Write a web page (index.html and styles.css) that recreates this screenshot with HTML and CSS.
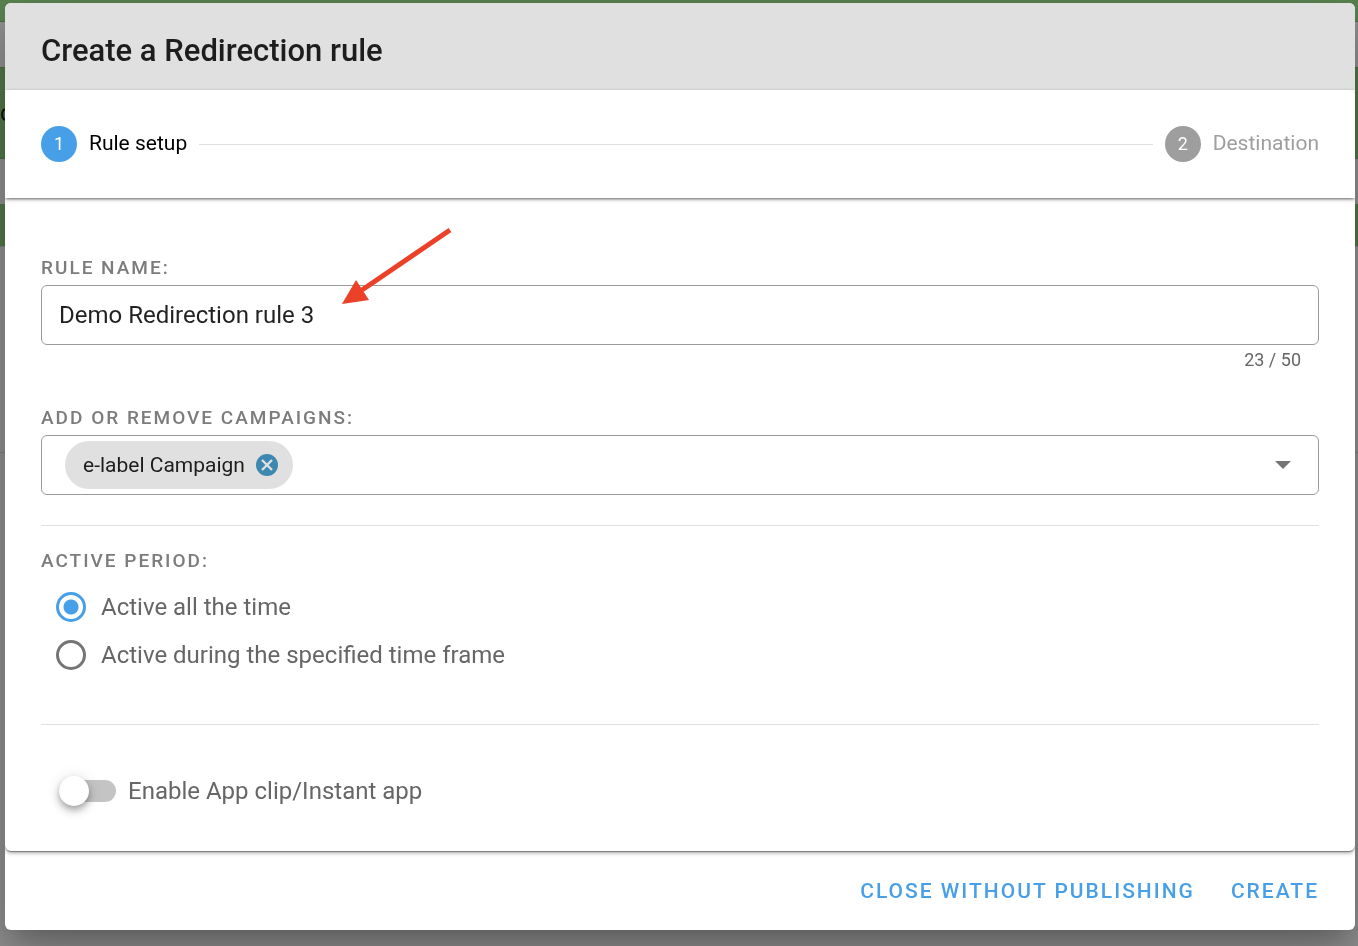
FILE: index.html
```html
<!DOCTYPE html>
<html lang="en">
<head>
<meta charset="utf-8">
<meta name="viewport" content="width=device-width, initial-scale=1">
<title>Create a Redirection rule</title>
<link rel="stylesheet" href="styles.css">
</head>
<body>
<div class="backdrop" aria-hidden="true">
  <div class="band band-top"></div>
  <div class="band band-gap"></div>
  <div class="band band-main"><span>c</span></div>
  <div class="band band-gap"></div>
  <div class="band band-low"></div>
  <div class="band band-panel"></div>
</div>

<main class="dialog" role="dialog" aria-labelledby="dialog-title">
  <header class="dialog-header">
    <h1 id="dialog-title">Create a Redirection rule</h1>
  </header>

  <form class="stepper">
    <ol class="steps">
      <li class="step step-active" aria-current="step"><span class="step-number">1</span><span>Rule setup</span></li>
      <li class="step-line" role="presentation"></li>
      <li class="step"><span class="step-number">2</span><span>Destination</span></li>
    </ol>

    <div class="content">
      <section class="group">
        <label class="caption" for="rule-name">RULE NAME:</label>
        <div class="name-field">
          <input class="field text-input" id="rule-name" type="text" maxlength="50" value="Demo Redirection rule 3">
          <svg class="arrow" width="110" height="78" viewBox="0 0 110 78" aria-hidden="true">
            <path d="M108 3 20 63" stroke="#eb4128" stroke-width="5" fill="none"/>
            <path d="M0 77 14 53 27 73Z" fill="#eb4128"/>
          </svg>
        </div>
        <div class="counter">23 / 50</div>
      </section>

      <section class="group campaigns">
        <label class="caption" for="campaigns">ADD OR REMOVE CAMPAIGNS:</label>
        <div class="field select-field">
          <span class="chip">e-label Campaign
            <button class="chip-remove" type="button" aria-label="Remove e-label Campaign">
              <svg width="24" height="24" viewBox="0 0 24 24" aria-hidden="true"><circle cx="12" cy="12" r="11" fill="#3d88b1"/><path d="M7 7 17 17M17 7 7 17" stroke="#e0e0e0" stroke-width="2.4"/></svg>
            </button>
          </span>
          <select id="campaigns" class="campaign-select"><option value=""></option></select>
          <svg class="caret" width="16" height="8" viewBox="0 0 16 8" aria-hidden="true"><path d="M0 0H16L8 8Z" fill="#757575"/></svg>
        </div>
      </section>

      <fieldset class="period">
        <legend class="caption">ACTIVE PERIOD:</legend>
        <div class="option"><input type="radio" name="period" id="always" checked><label for="always">Active all the time</label></div>
        <div class="option"><input type="radio" name="period" id="framed"><label for="framed">Active during the specified time frame</label></div>
      </fieldset>

      <div class="switch-row">
        <input class="switch" type="checkbox" role="switch" id="app-clip"><label for="app-clip">Enable App clip/Instant app</label>
      </div>
    </div>
  </form>

  <footer class="actions">
    <button type="button">CLOSE WITHOUT PUBLISHING</button>
    <button type="button">CREATE</button>
  </footer>
</main>
</body>
</html>
```
FILE: styles.css
```css
* { box-sizing: border-box; }

body {
  margin: 0;
  padding: 3px 3px 16px 5px;
  background: #929292;
  font-family: Roboto, "Liberation Sans", sans-serif;
  font-size: 24px;
  color: rgba(0, 0, 0, .87);
}

h1, ol, fieldset { margin: 0; padding: 0; border: 0; }

button, input, select { font: inherit; color: inherit; margin: 0; }

/* Dimmed page behind the dialog */
.backdrop {
  position: fixed;
  inset: 0;
  z-index: -1;
  display: flex;
  flex-direction: column;
  overflow: hidden;
}
.band { flex: none; }
.band-top { height: 22px; background: #5a8350; border-bottom: 1px solid #4c6d43; }
.band-gap { height: 45px; background: #929292; }
.band-main {
  height: 92px;
  display: flex;
  align-items: center;
  background: #54794a;
  border-top: 1px solid #4c6d43;
  border-bottom: 1px solid #4c6d43;
}
.band-main span { font-size: 24px; }
.band-low { height: 42px; background: #54794a; }
.band-panel { height: 207px; border-top: 1px solid #808080; border-bottom: 1px solid #808080; }

.dialog {
  border-radius: 6px;
  background: #fff;
  box-shadow: 0 16px 22px -10px rgba(0, 0, 0, .2), 0 36px 57px 4px rgba(0, 0, 0, .14), 0 14px 69px 12px rgba(0, 0, 0, .12);
}

.dialog-header {
  padding: 28px 36px 20px;
  border-radius: 6px 6px 0 0;
  background: #e0e0e0;
}
h1 { font-size: 31px; line-height: 39px; font-weight: 500; }

.stepper {
  position: relative;
  border-radius: 6px;
  background: #fff;
  box-shadow: 0 4px 2px -3px rgba(0, 0, 0, .2), 0 3px 3px rgba(0, 0, 0, .14), 0 1px 7px rgba(0, 0, 0, .12), 0 1px 1px rgba(0, 0, 0, .3);
  clip-path: inset(-2px 0 -12px);
}

.steps {
  display: flex;
  align-items: center;
  gap: 12px;
  padding: 36px;
  list-style: none;
  font-size: 21px;
  line-height: 34px;
  box-shadow: 0 4px 2px -3px rgba(0, 0, 0, .2), 0 3px 3px rgba(0, 0, 0, .14), 0 1px 2px rgba(0, 0, 0, .3);
}
.step { display: flex; align-items: flex-start; gap: 12px; color: #9e9e9e; }
.step-active { color: #000; }
.step-number {
  width: 36px;
  height: 36px;
  border-radius: 50%;
  background: #9e9e9e;
  color: #fff;
  font-size: 18px;
  line-height: 36px;
  text-align: center;
}
.step-active .step-number { background: #479fe8; }
.step-line { flex: 1; height: 1px; background: #e0e0e0; }

.content { padding: 55px 36px 42px; }

.group { display: flex; flex-direction: column; }
.campaigns { padding: 32px 0 30px; border-bottom: 1px solid #e0e0e0; }

.caption {
  display: block;
  padding: 0;
  margin-bottom: 2px;
  font-size: 19px;
  line-height: 30px;
  font-weight: 500;
  letter-spacing: 2px;
  color: #7c7c7c;
}

.field {
  width: 100%;
  height: 60px;
  border: 1px solid #9b9b9b;
  border-radius: 6px;
  background: #fff;
}
.name-field { position: relative; display: flex; }
.text-input { padding: 0 17px; }
.arrow { position: absolute; left: 301px; bottom: 40px; pointer-events: none; }
.counter { padding: 4px 18px 0; font-size: 18px; line-height: 22px; text-align: right; color: #666; }

.select-field { display: flex; align-items: center; padding: 0 27px 0 23px; }
.chip {
  display: flex;
  align-items: center;
  gap: 10px;
  height: 48px;
  padding: 0 14px 0 18px;
  border-radius: 24px;
  background: #e0e0e0;
  font-size: 21px;
  white-space: nowrap;
}
.chip-remove { display: flex; padding: 0; border: 0; background: none; }
.campaign-select { flex: 1; min-width: 0; height: 48px; border: 0; appearance: none; background: none; outline: 0; }

.period { padding: 20px 0 45px; border-bottom: 1px solid #e0e0e0; }
.period .caption { float: left; width: 100%; margin-bottom: 7px; }
.option {
  clear: both;
  display: flex;
  align-items: center;
  gap: 15px;
  height: 48px;
  padding-left: 15px;
  color: #666;
}
.option input {
  appearance: none;
  width: 30px;
  height: 30px;
  border: 3px solid #757575;
  border-radius: 50%;
  background: #fff;
}
.option input:checked {
  border-color: #479fe8;
  background: radial-gradient(circle, #479fe8 7px, #fff 8px);
}

.switch-row {
  display: flex;
  align-items: center;
  gap: 12px;
  padding: 48px 0 0 18px;
  line-height: 36px;
  color: #666;
}
.switch {
  appearance: none;
  position: relative;
  width: 57px;
  height: 22px;
  border-radius: 11px;
  background: #c4c4c4;
}
.switch::before {
  content: "";
  position: absolute;
  left: 0;
  top: -4px;
  width: 30px;
  height: 30px;
  border-radius: 50%;
  background: #fff;
  box-shadow: 0 3px 6px -1px rgba(0, 0, 0, .25), 0 6px 8px rgba(0, 0, 0, .14), 0 1px 15px rgba(0, 0, 0, .12);
}
.switch:checked::before { left: 27px; }

.actions {
  display: flex;
  flex-wrap: wrap;
  justify-content: flex-end;
  gap: 12px;
  padding: 13px 24px 12px;
}
.actions button {
  height: 54px;
  padding: 0 12px;
  border: 0;
  border-radius: 6px;
  background: none;
  font-size: 21px;
  font-weight: 500;
  letter-spacing: 2px;
  color: #479fe8;
}
```
